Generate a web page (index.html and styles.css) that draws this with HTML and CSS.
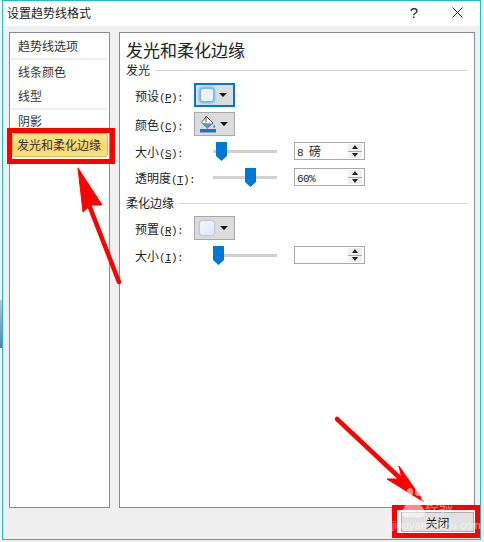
FILE: index.html
```html
<!DOCTYPE html>
<html lang="zh-CN">
<head>
  <meta charset="UTF-8" />
  <meta name="viewport" content="width=device-width, initial-scale=1.0"/>
  <title>设置趋势线格式</title>
  <link rel="stylesheet" href="styles.css">
</head>
<body>
  <div class="window">
    <div class="titlebar">
      <span class="title">设置趋势线格式</span>
      <span class="help">?</span>
      <svg class="close-x" width="11" height="11" viewBox="0 0 11 11"><path d="M0.5 0.5L10.5 10.5M10.5 0.5L0.5 10.5" stroke="#222" stroke-width="1" fill="none"/></svg>
    </div>

    <div class="body">
      <ul class="nav">
        <li class="nav-item nav-first">趋势线选项</li>
        <li class="nav-item nav-color">线条颜色</li>
        <li class="nav-item nav-sep">线型</li>
        <li class="nav-item nav-shadow">阴影</li>
        <li class="nav-item nav-active">发光和柔化边缘</li>
      </ul>

      <div class="panel">
        <h1>发光和柔化边缘</h1>

        <div class="group-title"><span>发光</span></div>
        <div class="row row-first">
          <label>预设<span class="ascii">(<u>P</u>):</span></label>
          <div class="picker picker-focus">
            <span class="swatch swatch-glow"></span>
            <span class="caret"></span>
          </div>
        </div>
        <div class="row">
          <label>颜色<span class="ascii">(<u>C</u>):</span></label>
          <div class="picker">
            <svg width="18" height="18" viewBox="0 0 18 18">
              <path d="M7.5 1.5L14 8L8.5 13L2.5 7.5Z" fill="#fff" stroke="#555" stroke-width="1"/>
              <path d="M7 1V7" stroke="#555" stroke-width="1"/>
              <path d="M3 8L8.5 13L13.5 8.5Z" fill="#5b93d5"/>
              <path d="M15 9.5C16 11 16.5 11.5 16 12.5C15.5 13 14.5 13 14.3 12C14.2 11.3 14.6 10.5 15 9.5Z" fill="#3a7fd0"/>
              <rect x="1" y="14" width="16" height="3.5" fill="#1f6fd6"/>
            </svg>
            <span class="caret"></span>
          </div>
        </div>
        <div class="row row-slider">
          <label class="label-wide">大小<span class="ascii">(<u>S</u>):</span></label>
          <div class="slider">
            <svg class="thumb thumb-a" width="11" height="19" viewBox="0 0 11 19"><path d="M0 0H11V14L5.5 19L0 14Z" fill="#0078d7"/></svg>
          </div>
          <div class="spin"><span class="spin-value"><span class="ascii">8 </span>磅</span><span class="spin-btns"><i class="up"></i><i class="down"></i></span></div>
        </div>
        <div class="row row-slider row-alpha">
          <label class="label-wide">透明度<span class="ascii">(<u>T</u>):</span></label>
          <div class="slider">
            <svg class="thumb thumb-b" width="11" height="19" viewBox="0 0 11 19"><path d="M0 0H11V14L5.5 19L0 14Z" fill="#0078d7"/></svg>
          </div>
          <div class="spin"><span class="spin-value"><span class="ascii">60%</span></span><span class="spin-btns"><i class="up"></i><i class="down"></i></span></div>
        </div>

        <div class="group-title group-second"><span>柔化边缘</span></div>
        <div class="row row-first">
          <label>预置<span class="ascii">(<u>R</u>):</span></label>
          <div class="picker">
            <span class="swatch swatch-soft"></span>
            <span class="caret"></span>
          </div>
        </div>
        <div class="row row-slider">
          <label class="label-wide">大小<span class="ascii">(<u>I</u>):</span></label>
          <div class="slider">
            <svg class="thumb thumb-c" width="11" height="19" viewBox="0 0 11 19"><path d="M0 0H11V14L5.5 19L0 14Z" fill="#0078d7"/></svg>
          </div>
          <div class="spin"><span class="spin-value"></span><span class="spin-btns"><i class="up"></i><i class="down"></i></span></div>
        </div>
      </div>
    </div>

    <div class="footer">
      <button class="close-btn">关闭</button>
    </div>
  </div>

  <!-- annotations pasted over the screenshot -->
  <div class="mark mark-nav"></div>
  <div class="mark mark-close"></div>
  <svg class="arrows" width="484" height="542" viewBox="0 0 484 542">
    <path d="M119 282L91 205L102 205L78 168L83 212L91 205" fill="#f00" stroke="#f00" stroke-width="1"/>
    <path d="M119 282L89 205" stroke="#f00" stroke-width="4.5" stroke-linecap="round"/>
    <path d="M337 419L402 480" stroke="#f00" stroke-width="4.5" stroke-linecap="round"/>
    <path d="M424 502L399 466L402 479L387 479Z" fill="#f00" stroke="#f00" stroke-width="1"/>
    <g fill="#fff" opacity="0.55">
      <ellipse cx="403" cy="498" rx="3" ry="4"/>
      <ellipse cx="410" cy="492" rx="3" ry="4"/>
      <ellipse cx="418" cy="492" rx="3" ry="4"/>
      <ellipse cx="424" cy="499" rx="3" ry="4"/>
      <path d="M402 514C402 507 408 502 413 502C418 502 425 507 425 514C425 518 420 518 413 517C407 518 402 518 402 514Z"/>
    </g>
  </svg>
  <span class="wm wm-cn">经验</span>
  <span class="wm wm-url">jingyan.baidu.com</span>
</body>
</html>
```

FILE: styles.css
```css
html, body {
  margin: 0;
  padding: 0;
}
body {
  width: 484px;
  height: 542px;
  position: relative;
  overflow: hidden;
  font-family: "Noto Sans CJK SC", "Liberation Sans", sans-serif;
  font-size: 12px;
  color: #222;
  background-color: #eeeeee;
  background-image: linear-gradient(to bottom, #f4f4f4 0, #f4f4f4 300px, #b9c6d0 300px, #4a86b8 348px, #f2f2f2 348px);
  background-size: 2px 100%;
  background-repeat: no-repeat;
}
.ascii {
  font-family: "Liberation Mono", monospace;
  font-size: 11px;
  letter-spacing: -0.6px;
}
.window {
  box-sizing: border-box;
  width: 479px;
  height: 540px;
  margin-left: 2px;
  border: 1px solid #1cbccb;
  background: #f0f0f0;
  display: flex;
  flex-direction: column;
}
.titlebar {
  box-sizing: border-box;
  height: 25px;
  flex: none;
  background: #fff;
  display: flex;
  align-items: center;
  padding: 0 0 3px 4px;
}
.title {
  flex: 1;
}
.help {
  font-family: "Liberation Sans", sans-serif;
  font-size: 15px;
  width: 16px;
  text-align: center;
  margin-right: 30px;
}
.close-x {
  margin-right: 17px;
}

.body {
  flex: none;
  height: 476px;
  display: flex;
  gap: 9px;
  margin: 6px 0 0 6px;
}
.nav, .panel {
  box-sizing: border-box;
  height: 476px;
  background: #fff;
  border: 1px solid #8a8a94;
  margin: 0;
}
.nav {
  width: 101px;
  flex: none;
  padding: 0;
  list-style: none;
}
.nav-item {
  padding-left: 8px;
  color: #333;
}
.nav-first {
  height: 25px;
  line-height: 25px;
  margin: 0 1px;
  padding-left: 7px;
  border-bottom: 2px solid #f0f0f0;
}
.nav-color {
  height: 25px;
  line-height: 24px;
}
.nav-sep {
  height: 23px;
  line-height: 22px;
  margin: 0 1px;
  padding-left: 7px;
  border-bottom: 2px solid #f0f0f0;
}
.nav-shadow {
  height: 23px;
  line-height: 22px;
}
.nav-active {
  box-sizing: border-box;
  height: 24px;
  line-height: 22px;
  margin: 0 1px 0 2px;
  padding-left: 4px;
  border: 1px solid #d9b44f;
  border-radius: 3px;
  background: linear-gradient(to bottom, #fde68d, #fdd568 60%, #fee189);
}

.panel {
  width: 356px;
  flex: none;
  padding: 0 6px;
}
h1 {
  font-size: 17px;
  font-weight: normal;
  line-height: 24px;
  margin: 5px 0 0 0;
  color: #222;
}
.group-title {
  height: 16px;
  line-height: 16px;
  display: flex;
  align-items: center;
  gap: 5px;
}
.group-title::after {
  content: "";
  flex: 1;
  height: 1px;
  background: #d9d9d9;
}
.group-second {
  margin-top: 9px;
}
.row {
  display: flex;
  align-items: center;
  height: 24px;
  margin-top: 5px;
  padding-left: 9px;
}
.row label {
  width: 59px;
  flex: none;
}
.row label.label-wide {
  width: 78px;
}
.row-slider {
  height: 18px;
  margin-top: 6px;
}
.row-alpha {
  margin-top: 8px;
}

.picker {
  box-sizing: border-box;
  width: 41px;
  height: 24px;
  background: #dcdcdc;
  border: 1px solid #a9a9a9;
  display: flex;
  align-items: center;
  padding-left: 4px;
}
.picker-focus {
  border: 2px solid #0078d7;
  padding-left: 3px;
}
.caret {
  width: 0;
  height: 0;
  margin-left: auto;
  margin-right: 6px;
  border-left: 4px solid transparent;
  border-right: 4px solid transparent;
  border-top: 4px solid #111;
}
.swatch {
  box-sizing: border-box;
  width: 14px;
  height: 14px;
  border-radius: 3px;
  margin-left: 1px;
  background: #eef2fb;
}
.swatch-glow {
  border: 1px solid #7fb2e6;
  box-shadow: 0 0 2px 1px #3fc3f0;
}
.swatch-soft {
  background: linear-gradient(135deg, #f5f8fd, #dbe6f6);
  box-shadow: 0 0 2px 1px #b4c2e0;
}

.slider {
  position: relative;
  width: 64px;
  height: 3px;
  flex: none;
  background: #d0d0d0;
  margin-right: 17px;
}
.thumb {
  position: absolute;
  top: -8px;
}
.thumb-a { left: 3px; }
.thumb-b { left: 32px; }
.thumb-c { left: 0; }

.spin {
  box-sizing: border-box;
  width: 71px;
  height: 18px;
  background: #fff;
  border: 1px solid #a9a9a9;
  display: flex;
  align-items: stretch;
}
.spin-value {
  flex: 1;
  padding-left: 2px;
  line-height: 16px;
}
.spin-btns {
  width: 14px;
  margin: 1px 2px 1px 0;
  background: #f0f0f0;
  display: flex;
  flex-direction: column;
}
.spin-btns i {
  flex: 1;
  display: flex;
  align-items: center;
  justify-content: center;
}
.spin-btns i::before {
  content: "";
  border-left: 3px solid transparent;
  border-right: 3px solid transparent;
}
.spin-btns .up {
  border-bottom: 1px solid #a9a9a9;
}
.spin-btns .up::before {
  border-bottom: 4px solid #222;
}
.spin-btns .down::before {
  border-top: 4px solid #222;
}

.footer {
  flex: 1;
  display: flex;
  justify-content: flex-end;
  align-items: flex-start;
  padding: 4px 6px 0 0;
}
.close-btn {
  box-sizing: border-box;
  width: 73px;
  height: 20px;
  padding: 0;
  background: #e1e1e1;
  border: 1px solid #adadad;
  box-shadow: 0 0 0 4px #fff;
  font: inherit;
  color: #111;
}

.mark {
  position: absolute;
  box-sizing: border-box;
  border: 5px solid #f00;
}
.mark-nav {
  left: 7px;
  top: 128px;
  width: 108px;
  height: 36px;
}
.mark-close {
  left: 392px;
  top: 505px;
  width: 88px;
  height: 33px;
}
.arrows {
  position: absolute;
  left: 0;
  top: 0;
}
.wm {
  position: absolute;
  color: #fff;
  opacity: 0.55;
  white-space: nowrap;
}
.wm-cn {
  left: 425px;
  top: 499px;
  font-size: 14px;
  line-height: 13px;
}
.wm-url {
  left: 392px;
  top: 519px;
  font-family: "Liberation Sans", sans-serif;
  font-size: 11px;
  line-height: 12px;
}
```
